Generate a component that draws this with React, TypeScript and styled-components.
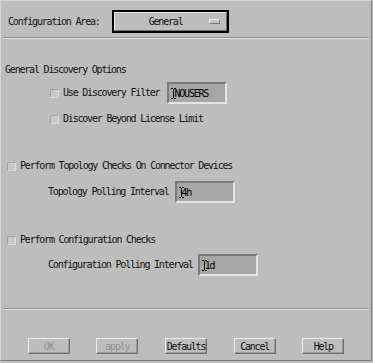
import React from "react";
import styled, { createGlobalStyle } from "styled-components";

const Global = createGlobalStyle`
  html, body { margin: 0; padding: 0; background: #bdbdbd; }
  * { box-sizing: border-box; }
`;

const FONT = `"DejaVu Sans Mono", "Liberation Mono", monospace`;

const Window = styled.div`
  width: 372px;
  height: 361px;
  background: #bdbdbd;
  border-top: 1px solid #d6d6d6;
  border-left: 1px solid #d6d6d6;
  border-right: 1px solid #7c7c7c;
  border-bottom: 1px solid #7c7c7c;
  display: flex;
  flex-direction: column;
  font-family: ${FONT};
  font-size: 10px;
  letter-spacing: -1.2px;
  color: #111;
`;

const TopBar = styled.div`
  display: flex;
  align-items: center;
  gap: 12px;
  padding: 9px 0 4px 7px;
`;

const Label = styled.span`
  line-height: 14px;
  white-space: nowrap;
`;

const OptionFrame = styled.div`
  width: 117px;
  height: 23px;
  border: 2px solid #000;
  display: flex;
`;

const OptionFace = styled.div`
  flex: 1;
  display: flex;
  align-items: center;
  border-top: 1px solid #ececec;
  border-left: 1px solid #ececec;
  border-right: 1px solid #707070;
  border-bottom: 1px solid #707070;
  padding: 0 6px 0 0;
`;

const OptionText = styled.span`
  flex: 1;
  text-align: center;
  padding-left: 8px;
`;

const Indicator = styled.span`
  width: 11px;
  height: 5px;
  border-top: 1px solid #f0f0f0;
  border-left: 1px solid #f0f0f0;
  border-right: 1px solid #7a7a7a;
  border-bottom: 1px solid #7a7a7a;
  background: #c4c4c4;
`;

const Separator = styled.div`
  height: 2px;
  margin: 0 2px;
  border-top: 1px solid #8e8e8e;
  border-bottom: 1px solid #e2e2e2;
`;

const Content = styled.div`
  flex: 1;
  display: flex;
  flex-direction: column;
  padding-top: 24px;
`;

const Heading = styled.div`
  line-height: 14px;
  padding-left: 4px;
  white-space: nowrap;
`;

const Row = styled.div<{ $indent: number; $top: number; $h: number }>`
  display: flex;
  align-items: center;
  height: ${(p) => p.$h}px;
  margin-top: ${(p) => p.$top}px;
  padding-left: ${(p) => p.$indent}px;
  white-space: nowrap;
`;

const Check = styled.span`
  width: 9px;
  height: 9px;
  margin-right: 4px;
  background: #c9c9c9;
  border-top: 1px solid #a3a3a3;
  border-left: 1px solid #a3a3a3;
  border-right: 1px solid #dcdcdc;
  border-bottom: 1px solid #dcdcdc;
  flex: none;
`;

const Field = styled.div<{ $gap: number }>`
  width: 60px;
  height: 22px;
  margin-left: ${(p) => p.$gap}px;
  background: #a6a6a6;
  border-top: 2px solid #7a7a7a;
  border-left: 2px solid #7a7a7a;
  border-right: 2px solid #e4e4e4;
  border-bottom: 2px solid #e4e4e4;
  display: flex;
  align-items: center;
  padding-left: 2px;
  color: #000;
`;

const Caret = styled.svg`
  width: 5px;
  height: 11px;
  margin-right: -2px;
  flex: none;
`;

const Footer = styled.div`
  height: 50px;
  display: flex;
  justify-content: space-evenly;
  align-items: flex-start;
  padding-top: 28px;
`;

const Button = styled.div<{ $disabled?: boolean }>`
  width: 42px;
  height: 16px;
  display: flex;
  align-items: center;
  justify-content: center;
  border-top: 1px solid #ececec;
  border-left: 1px solid #ececec;
  border-right: 1px solid #6e6e6e;
  border-bottom: 1px solid #6e6e6e;
  box-shadow: inset -1px -1px 0 #9a9a9a;
  color: ${(p) => (p.$disabled ? "#929292" : "#111")};
`;

const IBeam = () => (
  <Caret viewBox="0 0 5 11">
    <path d="M0 0.5H2M3 0.5H5M2.5 1V10M0 10.5H2M3 10.5H5" stroke="#000" strokeWidth="1" fill="none" />
  </Caret>
);

export default function App() {
  return (
    <>
      <Global />
      <Window>
        <TopBar>
          <Label>Configuration Area:</Label>
          <OptionFrame>
            <OptionFace>
              <OptionText>General</OptionText>
              <Indicator />
            </OptionFace>
          </OptionFrame>
        </TopBar>
        <Separator />
        <Content>
          <Heading>General Discovery Options</Heading>
          <Row $indent={49} $top={5} $h={22}>
            <Check />
            <Label>Use Discovery Filter</Label>
            <Field $gap={8}>
              <IBeam />
              NOUSERS
            </Field>
          </Row>
          <Row $indent={49} $top={8} $h={14}>
            <Check />
            <Label>Discover Beyond License Limit</Label>
          </Row>
          <Row $indent={6} $top={33} $h={14}>
            <Check />
            <Label>Perform Topology Checks On Connector Devices</Label>
          </Row>
          <Row $indent={47} $top={8} $h={22}>
            <Label>Topology Polling Interval</Label>
            <Field $gap={6}>
              <IBeam />
              4h
            </Field>
          </Row>
          <Row $indent={6} $top={30} $h={14}>
            <Check />
            <Label>Perform Configuration Checks</Label>
          </Row>
          <Row $indent={47} $top={7} $h={22}>
            <Label>Configuration Polling Interval</Label>
            <Field $gap={5}>
              <IBeam />
              1d
            </Field>
          </Row>
        </Content>
        <Separator />
        <Footer>
          <Button $disabled>OK</Button>
          <Button $disabled>apply</Button>
          <Button>Defaults</Button>
          <Button>Cancel</Button>
          <Button>Help</Button>
        </Footer>
      </Window>
    </>
  );
}
